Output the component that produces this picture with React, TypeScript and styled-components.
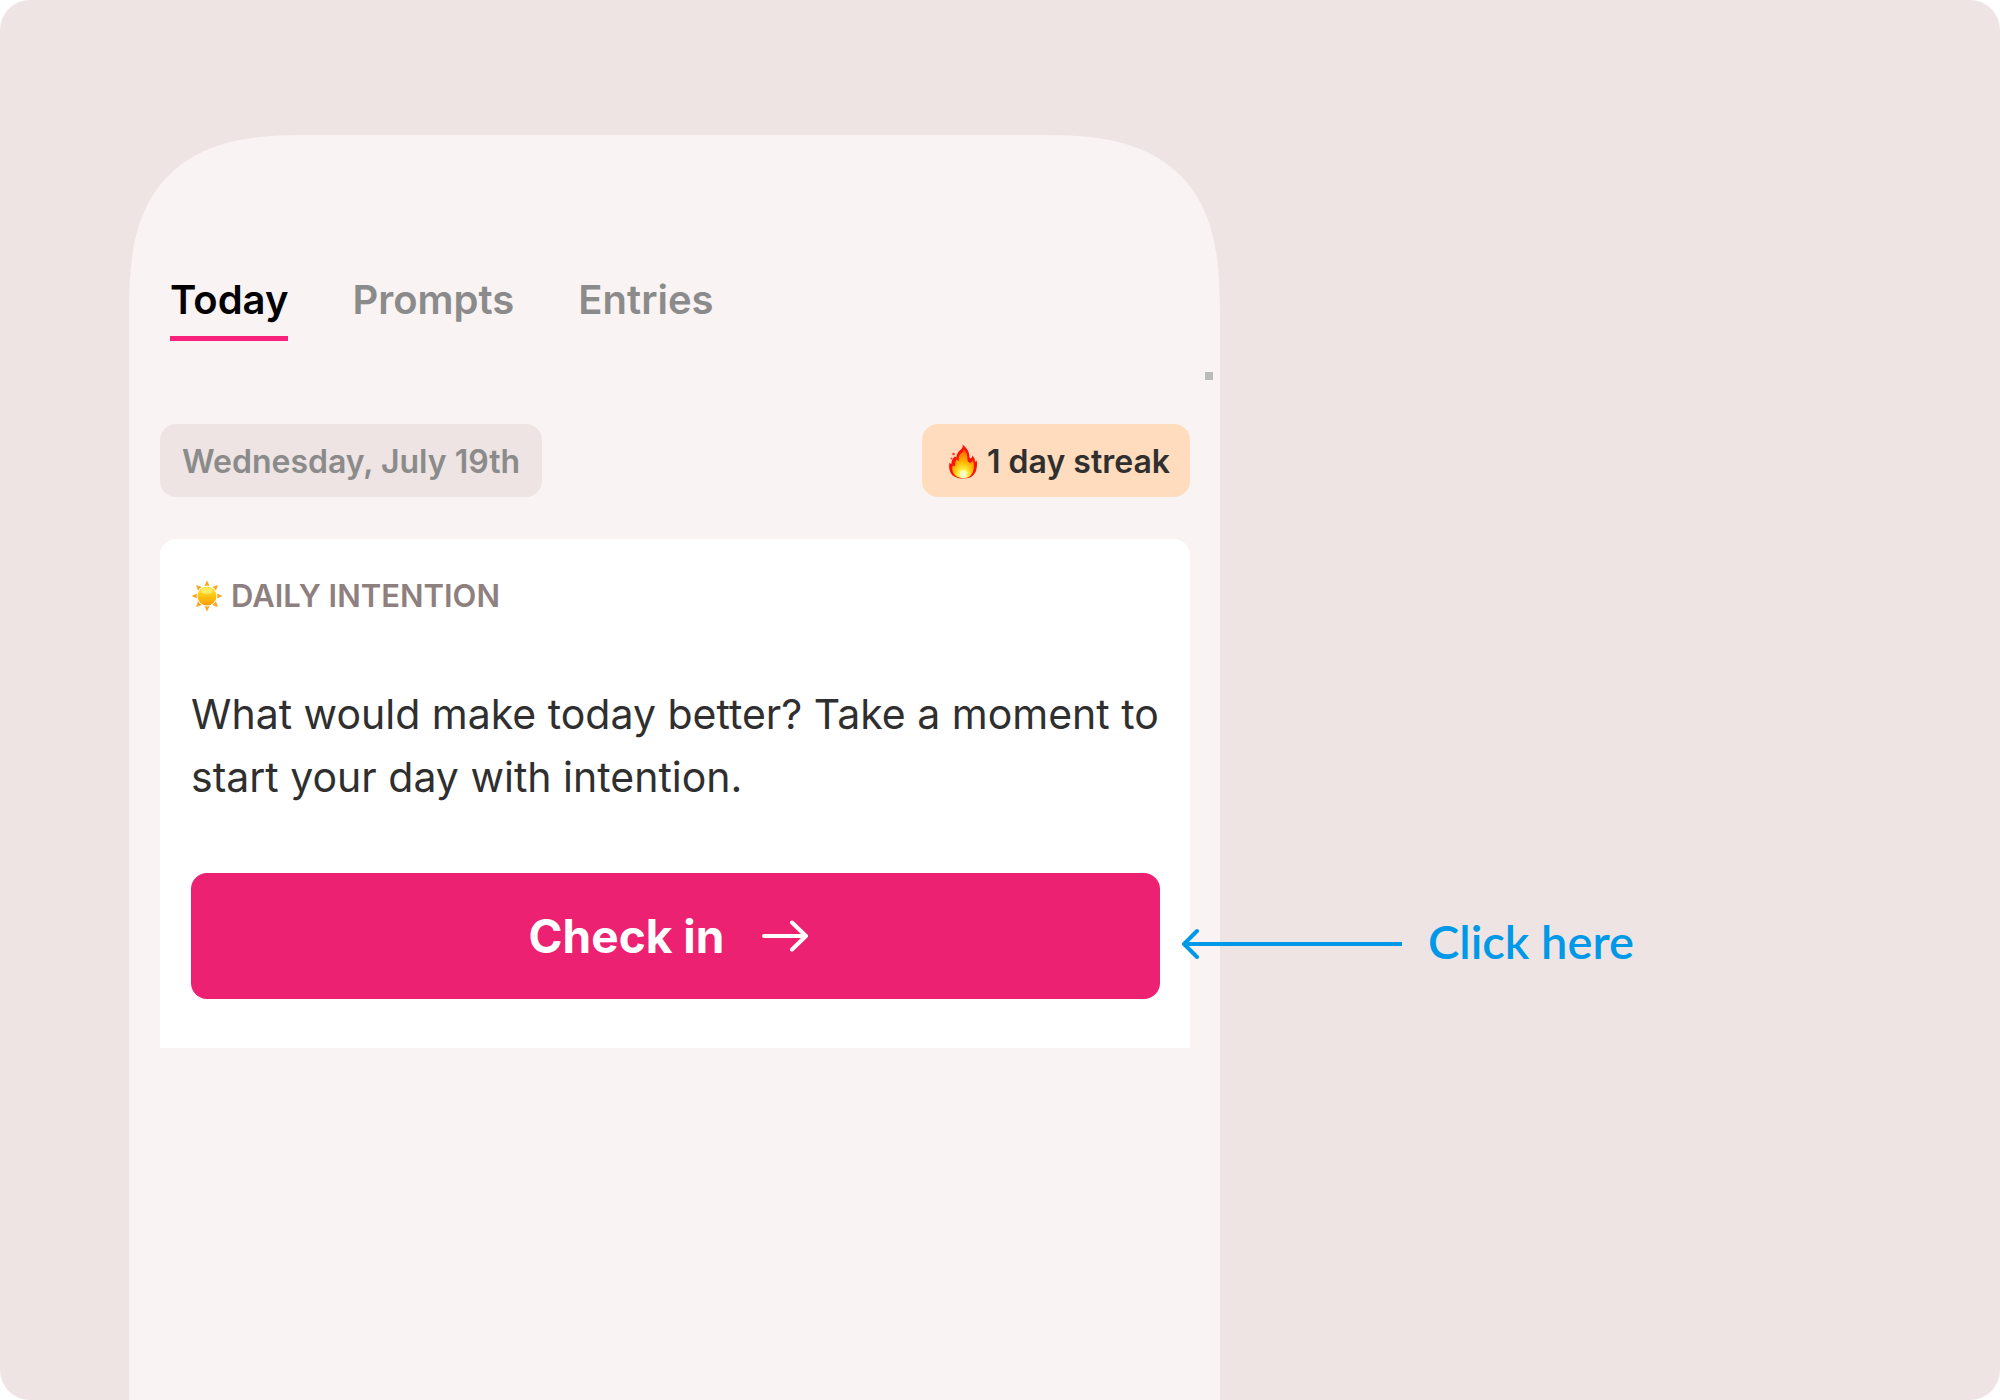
import React from "react";
import styled, { createGlobalStyle } from "styled-components";

const GlobalStyle = createGlobalStyle`
  *, *::before, *::after { box-sizing: border-box; }
  body {
    margin: 0;
    background: #ffffff;
    color: #2f2f2f;
    font-family: Inter, "Liberation Sans", sans-serif;
  }
  button { font: inherit; border: 0; cursor: pointer; }
`;

const Stage = styled.main`
  display: grid;
  grid-template-columns: minmax(0, 1091fr) minmax(0, 780fr);
  min-height: 100vh;
  padding: 135px 0 0 129px;
  border-radius: 30px;
  background: #eee4e3;
`;

const Phone = styled.section`
  position: relative;
  padding: 140px 30px 60px 31px;
  border-radius: 142px 142px 0 0;
  background: #f9f3f3;

  @supports (corner-shape: superellipse(1.46)) {
    border-radius: 180px 180px 0 0;
    corner-shape: superellipse(1.46);
  }
`;

const ScrollMark = styled.span`
  position: absolute;
  top: 237px;
  right: 7px;
  width: 8px;
  height: 8px;
  background: #bcbbbb;
`;

const Tabs = styled.nav`
  display: flex;
  gap: 64px;
  padding-left: 10px;
`;

const Tab = styled.button<{ $active?: boolean }>`
  padding: 0 0 11px;
  border-bottom: 5px solid ${(p) => (p.$active ? "#f8217b" : "transparent")};
  background: none;
  color: ${(p) => (p.$active ? "#000000" : "#8b8b8b")};
  font-size: 40px;
  font-weight: 600;
  line-height: 50px;
`;

const StatusRow = styled.div`
  display: flex;
  justify-content: space-between;
  margin-top: 83px;
`;

const Chip = styled.div<{ $tone: "muted" | "warm" }>`
  display: flex;
  align-items: center;
  gap: 10px;
  height: 73px;
  padding: ${(p) => (p.$tone === "warm" ? "2px 20px 0 27px" : "2px 22px 0")};
  border-radius: 16px;
  background: ${(p) => (p.$tone === "warm" ? "#ffdcbd" : "#ede4e3")};
  color: ${(p) => (p.$tone === "warm" ? "#2f2f2f" : "#8b8b8b")};
  font-size: 32px;
  font-weight: 600;
`;

const Card = styled.article`
  margin-top: 42px;
  padding: 37px 30px 49px 31px;
  border-radius: 16px 16px 0 0;
  background: #ffffff;
`;

const CardLabel = styled.h2`
  display: flex;
  align-items: center;
  gap: 8px;
  margin: 0;
  color: #8f8080;
  font-size: 31px;
  font-weight: 600;
  line-height: 40px;
`;

const Question = styled.p`
  margin: 67px 0 64px;
  font-size: 41px;
  line-height: 63px;
`;

const Action = styled.div`
  position: relative;
`;

const CheckIn = styled.button`
  display: flex;
  align-items: center;
  justify-content: center;
  gap: 38px;
  width: 100%;
  height: 126px;
  border-radius: 16px;
  background: #ed2172;
  color: #ffffff;
  font-size: 46px;
  font-weight: 700;
`;

const Callout = styled.div`
  position: absolute;
  top: 38px;
  left: calc(100% + 22px);
  display: flex;
  align-items: center;
  gap: 26px;
  color: #0099e8;
  font-family: Lato, "Liberation Sans", sans-serif;
  font-size: 47px;
  font-weight: 600;
  line-height: 60px;
  white-space: nowrap;
`;

const Flame = () => (
  <svg width="28" height="35" viewBox="0 0 28 35" aria-hidden="true">
    <defs>
      <radialGradient id="flame" cx="0.5" cy="0.92" r="0.9">
        <stop offset="0" stopColor="#fff9b0" />
        <stop offset="0.25" stopColor="#ffee3c" />
        <stop offset="0.55" stopColor="#ffb400" />
        <stop offset="0.85" stopColor="#ff7a00" />
        <stop offset="1" stopColor="#ff5000" />
      </radialGradient>
    </defs>
    <path
      fill="#fb1405"
      d="M13.5 0.5C16.5 3 20 6.500 20.300 11.500c.1 1.700.4 2.800 1.200 3.100 1-.2 1.700-1.300 1.800-3 2.200 2.200 2.700 3.800 2.600 6 1-.1 1.500-.6 1.900-1.100.5 4.500.2 9.500-2.300 13.200C23 33 19.500 34.500 14.500 34.500 8 34.500 3.500 32.500 1.500 28.500-.2 25-.2 21 .7 18.500c.3.9.8 1.400 1.600 1.500.2-3.300 1.200-5.600 3.700-7.700.6.9.9 1.200 1.300 1.200C7.700 9.500 9.500 7.300 12.200 5.200 13.600 4 13.900 2.500 13.500.5Z"
    />
    <circle cx="4.500" cy="10" r="1.300" fill="#fb3a20" />
    <circle cx="2.500" cy="14.500" r="1" fill="#fb3a20" />
    <path
      fill="url(#flame)"
      d="M14.500 5c3.500 3 4 7 3.900 10 .2 2.500 1.200 3.700 2.800 4 1.300-.3 2-1.500 2.400-3 1.500 3 1.900 8 .2 12-1.500 3.800-4.800 6.200-8.800 6.200-5.500 0-9.500-2.200-11-6-1-2.700-.9-4.700-.3-6.700 1 .8 1.800.9 2.500.7-.3-2.700.2-5 1.500-7 .8 1.300 1.600 1.700 2.300 1.500C9 12.500 11 10 13.300 8.500 14.300 7.700 14.500 7 14.500 5Z"
    />
    <ellipse cx="14.500" cy="30" rx="3.800" ry="4" fill="#fffbd0" opacity="0.8" />
  </svg>
);

const Sun = () => (
  <svg width="32" height="32" viewBox="-16 -16 32 32" aria-hidden="true">
    <defs>
      <linearGradient id="sun" x1="0" y1="0" x2="0" y2="1">
        <stop offset="0" stopColor="#ffe53d" />
        <stop offset="0.45" stopColor="#ffc914" />
        <stop offset="1" stopColor="#ff9a08" />
      </linearGradient>
    </defs>
    {[0, 45, 90, 135, 180, 225, 270, 315].map((angle) => (
      <path
        key={angle}
        d="M0 -15.500 L2.600 -10 Q0 -11 -2.600 -10 Z"
        fill="#fba51e"
        transform={`rotate(${angle})`}
      />
    ))}
    <circle r="9.500" fill="url(#sun)" />
    <ellipse cy="-5" rx="6" ry="3.300" fill="#fff27a" opacity="0.7" />
  </svg>
);

const ArrowRight = () => (
  <svg width="60" height="32" viewBox="0 0 60 32" fill="none" stroke="#ffffff" strokeWidth="4" strokeLinecap="round" strokeLinejoin="round" aria-hidden="true">
    <path d="M2 16H44M30 2.500L44 16L30 29.500" />
  </svg>
);

const ArrowLeft = () => (
  <svg width="220" height="36" viewBox="0 0 220 36" fill="none" stroke="#0099e8" strokeWidth="4" aria-hidden="true">
    <path d="M3 21H220" />
    <path d="M15 8L2 21L15 34" strokeLinecap="round" strokeLinejoin="round" />
  </svg>
);

export default function App() {
  return (
    <Stage>
      <GlobalStyle />
      <Phone>
        <ScrollMark />
        <Tabs aria-label="Journal">
          <Tab $active aria-current="page">Today</Tab>
          <Tab>Prompts</Tab>
          <Tab>Entries</Tab>
        </Tabs>
        <StatusRow>
          <Chip $tone="muted">Wednesday, July 19th</Chip>
          <Chip $tone="warm">
            <Flame />
            1 day streak
          </Chip>
        </StatusRow>
        <Card>
          <CardLabel>
            <Sun />
            DAILY INTENTION
          </CardLabel>
          <Question>
            What would make today better? Take a moment to start your day with intention.
          </Question>
          <Action>
            <CheckIn>
              Check in
              <ArrowRight />
            </CheckIn>
            <Callout>
              <ArrowLeft />
              Click here
            </Callout>
          </Action>
        </Card>
      </Phone>
    </Stage>
  );
}
